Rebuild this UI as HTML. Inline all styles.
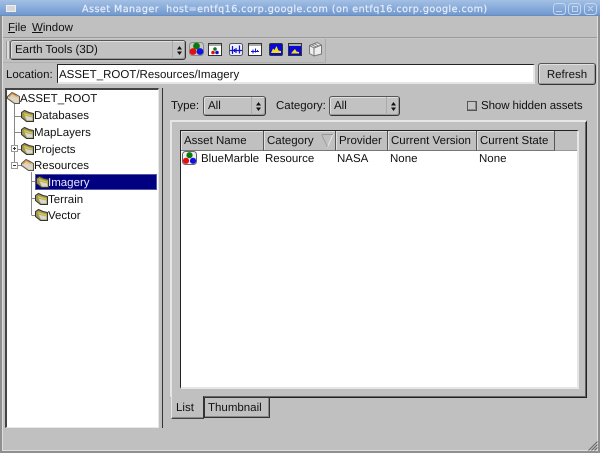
<!DOCTYPE html>
<html><head><meta charset="utf-8">
<style>
html,body{margin:0;padding:0;width:600px;height:453px;overflow:hidden;background:#c0c0c0}
body{position:relative;font-family:"Liberation Sans",sans-serif;font-size:11.5px;color:#111;text-rendering:geometricPrecision;filter:blur(.3px)}
.a{position:absolute;box-sizing:border-box}
.t{position:absolute;white-space:pre;line-height:14px;height:14px}
.b{position:absolute;box-sizing:border-box;background:#c2c2c2;border:1px solid #555;border-right-color:#333;border-bottom-color:#333;box-shadow:inset 1px 1px 0 #e0e0e0,inset -1px -1px 0 #999;border-radius:3px}
.h{position:absolute;box-sizing:border-box;top:131px;height:20px;background:#c0c0c0;border-right:1px solid #555;border-bottom:1px solid #777;box-shadow:inset 1px 1px 0 #e0e0e0;padding:3px 0 0 3px;line-height:14px;white-space:pre}
svg{position:absolute;overflow:visible}
</style></head><body>
<!-- title bar -->
<div class="a" style="left:0;top:0;width:600px;height:16px;background:linear-gradient(#a3c0e4,#7199d0);border-bottom:1px solid #6a8cba"></div>
<svg style="left:0;top:0" width="600" height="17">
<rect x="6.5" y="5.5" width="9" height="6" fill="#d8d8d8" stroke="#f0f0f0"/>
<g fill="none" stroke="#c5d6ee">
<rect x="553.5" y="3.5" width="12" height="11" rx="3"/>
<rect x="568.5" y="3.5" width="12" height="11" rx="3"/>
<rect x="584.5" y="3.5" width="12" height="11" rx="3"/>
<path d="M556 11.5h6M572.5 6.5h5v5h-5zM588 6l5 5M593 6l-5 5"/></g></svg>
<div class="t" style="left:82px;top:3px;font:9.6px/14px 'DejaVu Sans',sans-serif;color:#e8eef8;letter-spacing:.45px;-webkit-text-stroke:.2px #e8eef8">Asset Manager  host=entfq16.corp.google.com (on entfq16.corp.google.com)</div>
<!-- window edges -->
<div class="a" style="left:0;top:16px;width:2px;height:437px;background:#8f8f8f"></div>
<div class="a" style="left:2px;top:16px;width:1px;height:434px;background:#dedede"></div>
<div class="a" style="left:597px;top:16px;width:1px;height:434px;background:#dedede"></div>
<div class="a" style="left:598px;top:16px;width:2px;height:437px;background:#8f8f8f"></div>
<div class="a" style="left:2px;top:450px;width:596px;height:1px;background:#dedede"></div>
<div class="a" style="left:0;top:451px;width:600px;height:2px;background:#8f8f8f"></div>
<svg style="left:588px;top:441px" width="10" height="10"><path d="M9.5 .5L.5 9.5M9.5 3.5L3.5 9.5M9.5 6.5L6.5 9.5" stroke="#666" fill="none"/></svg>
<!-- menu -->
<div class="t" style="left:8px;top:21px"><u>F</u>ile</div>
<div class="t" style="left:32px;top:21px"><u>W</u>indow</div>
<div class="a" style="left:3px;top:37px;width:594px;height:2px;background:#999;border-bottom:1px solid #c8c8c8"></div>
<!-- toolbar -->
<div class="a" style="left:3px;top:39px;width:323px;height:24px;border-right:1px solid #aaa;border-bottom:1px solid #b0b0b0"></div>
<div class="a" style="left:6px;top:41px;width:4px;height:18px;border-left:1px solid #999;border-right:1px solid #999;background:#dcdcdc"></div>
<div class="b" style="left:10px;top:40px;width:176px;height:20px"></div>
<div class="a" style="left:172px;top:41px;width:1px;height:18px;background:#aaa"></div>
<div class="t" style="left:15px;top:43px">Earth Tools (3D)</div>
<svg style="left:177px;top:46px" width="5" height="9"><path d="M2.5 0L5 3.5H0zM2.5 9L0 5.5H5z" fill="#111"/></svg>
<!-- toolbar icons -->
<svg style="left:189px;top:42px" width="15" height="14"><rect x=".5" y=".5" width="14" height="13" rx="3" fill="#c8c8c8" stroke="#888"/><circle cx="7.5" cy="4" r="3.4" fill="#0a7a0a"/><circle cx="4" cy="9.5" r="3.4" fill="#e01010"/><circle cx="11" cy="9.5" r="3.4" fill="#1010e0"/></svg>
<svg style="left:208px;top:43px" width="14" height="13"><rect x=".5" y=".5" width="13" height="12" fill="#fff" stroke="#333"/><rect x="1" y="1" width="12" height="2" fill="#aaa"/><circle cx="7" cy="6" r="1.8" fill="#0a7a0a"/><circle cx="5" cy="9.5" r="1.8" fill="#e01010"/><circle cx="9" cy="9.5" r="1.8" fill="#1010e0"/></svg>
<svg style="left:229px;top:43px" width="14" height="13"><rect x=".5" y=".5" width="13" height="12" rx="2" fill="#eef" stroke="#555"/><path d="M1 7.5h12M3.5 3v8M7 5v5M10.5 2.5v8M5.5 6v3" stroke="#1010d0" fill="none" stroke-width="1.2"/></svg>
<svg style="left:248px;top:43px" width="14" height="13"><rect x=".5" y=".5" width="13" height="12" fill="#fff" stroke="#333"/><rect x="1" y="1" width="12" height="2" fill="#aaa"/><path d="M3 8.5h8M5 6.5v4M7.5 5.5v4M9.5 7v2" stroke="#1010d0" fill="none"/></svg>
<svg style="left:269px;top:43px" width="14" height="13"><rect x=".5" y=".5" width="13" height="12" rx="1.5" fill="#0808d8" stroke="#333"/><path d="M2 10L4 5.5 5.5 7 7.5 3 9.5 7.5 12 8v2z" fill="#f0e020"/></svg>
<svg style="left:288px;top:43px" width="14" height="13"><rect x=".5" y=".5" width="13" height="12" fill="#0808d8" stroke="#333"/><rect x="1" y="1" width="12" height="2" fill="#aaa"/><path d="M3 10.5L5 8 7 6 8.5 8.5 11 9v1.5z" fill="#f0e020"/></svg>
<svg style="left:308px;top:41px" width="15" height="16"><path d="M1.5 4.5L9 1.5 13.5 4v9L6 15 1.5 12.5z" fill="#eee" stroke="#777"/><path d="M1.5 4.5L6 7v8M6 7l7.5-3M3.5 3.5L8 6M6 2.5l4.5 2.5" fill="none" stroke="#777"/></svg>
<!-- location -->
<div class="t" style="left:6px;top:68px">Location:</div>
<div class="a" style="left:57px;top:64px;width:478px;height:20px;background:#fff;border:1px solid #222;border-right:2px solid #e6e6e6;border-bottom:2px solid #e6e6e6;border-radius:1px"></div>
<div class="t" style="left:59px;top:68px">ASSET_ROOT/Resources/Imagery</div>
<div class="b" style="left:538px;top:63px;width:58px;height:22px;text-align:center;line-height:22px">Refresh</div>
<!-- tree -->
<div class="a" style="left:5px;top:88px;width:154px;height:340px;background:#fff;border:1px solid #444;border-top-width:2px;border-left-width:2px;border-right-color:#e8e8e8;border-bottom-color:#e8e8e8"></div>
<svg style="left:0;top:0" width="170" height="230">
<defs>
<g id="f"><path d="M.5 2.5L3.5 .5 8 2.5 12.5 3.5V11.5H5.5L.5 7.5z" fill="#a09a50" stroke="#333"/><path d="M3 3L11.5 5.5V7L3.5 5z" fill="#d8c850"/><path d="M3.5 5.5L11.5 7.5V10.5H6z" fill="#d8d8d0"/></g>
<g id="o"><path d="M.5 4.5L5 .5 9 2.5 12.5 4.5V11.5H7.5L.5 6.5z" fill="#e8c890" stroke="#555"/><path d="M3 4L11.5 6.5V10.5H8L2 6z" fill="#d8d8d0"/><path d="M2 5L5 1.5 10 4.5" fill="none" stroke="#e09040"/></g>
</defs>
<path d="M14.5 103V165M14.5 116.5H22M14.5 132.5H22M14.5 149.5H22M14.5 165.5H22M31.5 172V215M31.5 181.5H37M31.5 198.5H37M31.5 215.5H37" stroke="#888" fill="none"/>
<rect x="11.5" y="145.5" width="6" height="6" fill="#fff" stroke="#999"/><path d="M13 148.5h3M14.5 147v3" stroke="#333"/>
<rect x="11.5" y="162.5" width="6" height="6" fill="#fff" stroke="#999"/><path d="M13 165.5h3" stroke="#333"/>
<use href="#o" x="7" y="92"/>
<use href="#f" x="21" y="110"/>
<use href="#f" x="21" y="127"/>
<use href="#f" x="21" y="143"/>
<use href="#o" x="21" y="159"/>
<use href="#f" x="35" y="193"/>
<use href="#f" x="35" y="209"/>
</svg>
<div class="a" style="left:35px;top:174px;width:122px;height:16px;background:#000080;border:1px solid #5555aa"></div>
<svg style="left:36px;top:176px" width="13" height="12"><use href="#f"/></svg>
<div class="t" style="left:20px;top:92px">ASSET_ROOT</div>
<div class="t" style="left:34px;top:109px">Databases</div>
<div class="t" style="left:34px;top:126px">MapLayers</div>
<div class="t" style="left:34px;top:143px">Projects</div>
<div class="t" style="left:34px;top:159px">Resources</div>
<div class="t" style="left:48px;top:176px;color:#e8e8ff">Imagery</div>
<div class="t" style="left:48px;top:193px">Terrain</div>
<div class="t" style="left:48px;top:209px">Vector</div>
<!-- splitter -->
<div class="a" style="left:162px;top:88px;width:1px;height:340px;background:#333"></div>
<!-- filter row -->
<div class="t" style="left:171px;top:99px">Type:</div>
<div class="b" style="left:203px;top:96px;width:63px;height:20px"></div>
<div class="a" style="left:251px;top:97px;width:1px;height:18px;background:#aaa"></div>
<div class="t" style="left:208px;top:99px">All</div>
<svg style="left:256px;top:102px" width="5" height="9"><path d="M2.5 0L5 3.5H0zM2.5 9L0 5.5H5z" fill="#111"/></svg>
<div class="t" style="left:276px;top:99px">Category:</div>
<div class="b" style="left:329px;top:96px;width:71px;height:20px"></div>
<div class="a" style="left:386px;top:97px;width:1px;height:18px;background:#aaa"></div>
<div class="t" style="left:334px;top:99px">All</div>
<svg style="left:391px;top:102px" width="5" height="9"><path d="M2.5 0L5 3.5H0zM2.5 9L0 5.5H5z" fill="#111"/></svg>
<div class="a" style="left:467px;top:101px;width:10px;height:10px;background:#c4c4c4;border:1px solid #555;box-shadow:inset -1px -1px 0 #8a8a8a"></div>
<div class="t" style="left:481px;top:99px;letter-spacing:-.08px">Show hidden assets</div>
<!-- tab frame -->
<div class="a" style="left:170px;top:120px;width:417px;height:278px;border-left:2px solid #e6e6e6;border-top:2px solid #e6e6e6;border-right:1px solid #222;border-bottom:1px solid #222;box-shadow:inset -1px -1px 0 #666"></div>
<!-- list -->
<div class="a" style="left:180px;top:130px;width:399px;height:259px;background:#fff;border:1px solid #222;border-right:2px solid #e6e6e6;border-bottom:2px solid #e6e6e6"></div>
<div class="a" style="left:181px;top:131px;width:396px;height:20px;background:#c0c0c0"></div>
<div class="h" style="left:181px;width:83px">Asset Name</div>
<div class="h" style="left:264px;width:72px">Category</div>
<div class="h" style="left:336px;width:52px">Provider</div>
<div class="h" style="left:388px;width:89px">Current Version</div>
<div class="h" style="left:477px;width:78px">Current State</div>
<div class="a" style="left:555px;top:150px;width:22px;height:1px;background:#999"></div>
<svg style="left:321px;top:134px" width="13" height="14"><path d="M.5 .5H12L6.5 13z" fill="none" stroke="#e6e6e6"/><path d="M.5 .5H12M.5 .5L6.5 13" fill="none" stroke="#999"/></svg>
<svg style="left:182px;top:151px" width="15" height="15"><rect x=".5" y=".5" width="14" height="13" rx="3" fill="#eee" stroke="#666"/><circle cx="7.5" cy="4.2" r="3.1" fill="#0a7a0a"/><circle cx="4" cy="9.8" r="3.1" fill="#e01010"/><circle cx="11" cy="9.8" r="3.1" fill="#1010e0"/></svg>
<div class="t" style="left:201px;top:152px">BlueMarble</div>
<div class="t" style="left:265px;top:152px">Resource</div>
<div class="t" style="left:337px;top:152px">NASA</div>
<div class="t" style="left:390px;top:152px">None</div>
<div class="t" style="left:479px;top:152px">None</div>
<!-- tabs -->
<div class="a" style="left:204px;top:397px;width:66px;height:21px;background:#c0c0c0;border:1px solid #333;box-shadow:inset -1px -1px 0 #888"></div>
<div class="t" style="left:208px;top:401px">Thumbnail</div>
<div class="a" style="left:171px;top:396px;width:33px;height:23px;background:#c0c0c0;border-left:1px solid #e6e6e6;border-right:1px solid #333;border-bottom:1px solid #444;box-shadow:inset 0 -1px 0 #888"></div>
<div class="t" style="left:176px;top:401px">List</div>
</body></html>
